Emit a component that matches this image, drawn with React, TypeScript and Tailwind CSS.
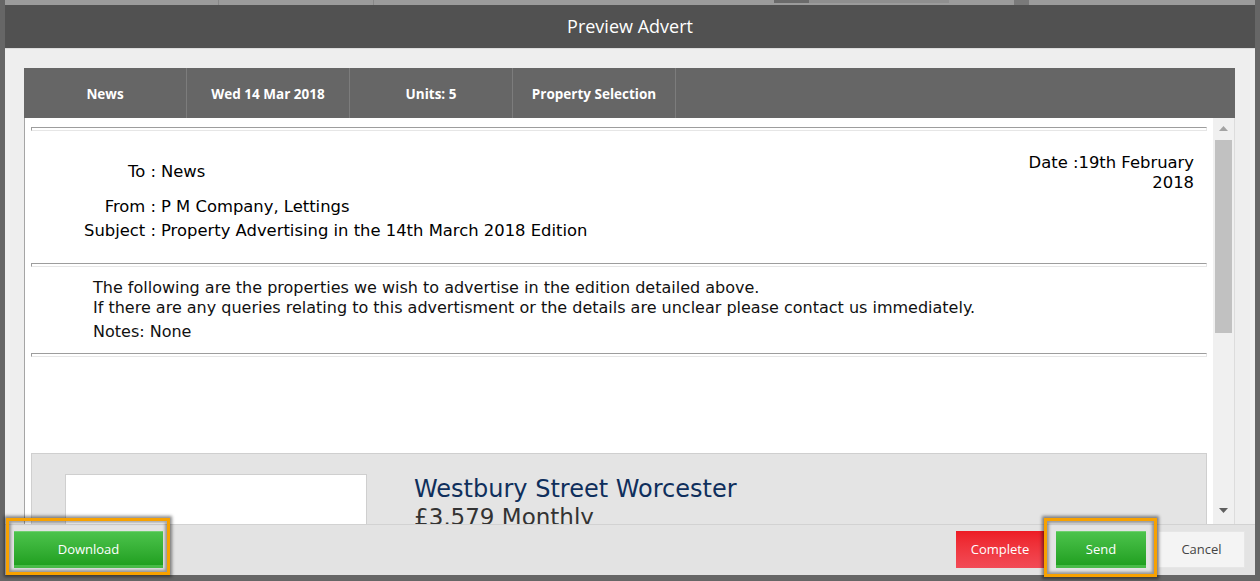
import React from "react";

const tabs = ["News", "Wed 14 Mar 2018", "Units: 5", "Property Selection"];

const Rule = () => (
  <div className="h-[4px] border border-t-[#9d9d9d] border-l-[#9d9d9d] border-b-[#e6e6e6] border-r-[#e6e6e6]" />
);

const bodyFont = { fontFamily: '"DejaVu Sans", "Liberation Sans", sans-serif' };

const HeaderRow = ({ label, value, className = "" }: { label: string; value: string; className?: string }) => (
  <div className={"flex h-[24px] items-center text-[16.4px] text-black " + className}>
    <div className="w-[125px] text-right">{label}</div>
    <div className="ml-[5px]">{value}</div>
  </div>
);

const App = () => {
  return (
    <div className="relative w-[1260px] h-[581px] bg-[#666] overflow-hidden font-['Open_Sans',sans-serif]">
      {/* page behind the overlay */}
      <div className="mx-[5px] h-[5px] bg-[#9b9b9b] flex overflow-hidden">
        <div className="w-[214px] border-r border-[#888]" />
        <div className="w-[155px] border-r border-[#888]" />
        <div className="w-[395px] flex items-end pl-[400px]">
          <div className="w-[60px] h-[2px] bg-[#8a8a8a]" />
        </div>
        <div className="w-[35px] h-[3px] bg-[#6a6a6a]" />
        <div className="w-[140px] h-[3px] bg-[#8f8f8f]" />
        <div className="w-[65px]" />
        <div className="w-[15px] h-[5px] bg-[#7a7a7a]" />
      </div>

      {/* modal */}
      <div className="mx-[5px] h-[570px] flex flex-col bg-[#eee]">
        <div className="h-[44px] bg-[#515151] border-b border-[#dcdcdc] flex items-center justify-center text-white text-[18px]">
          Preview Advert
        </div>

        <div className="flex-1 flex flex-col pl-[19px] pr-[20px] pt-[19px] min-h-0">
          <div className="h-[50px] bg-[#666] flex shrink-0">
            {tabs.map((t) => (
              <div
                key={t}
                className="w-[163px] border-r border-[#7c7c7c] flex items-center justify-center pt-[3px] text-white text-[13.5px] font-bold"
              >
                {t}
              </div>
            ))}
          </div>

          <div className="flex-1 flex min-h-0">
            <div
              className="flex-1 bg-white border-l border-[#a5a5a5] pl-[6px] pr-[6px] pt-[9px] overflow-hidden text-[16px] text-[#111]"
              style={bodyFont}
            >
              <Rule />

              <div className="flex justify-between">
                <div className="pt-[29px]">
                  <HeaderRow label="To :" value="News" />
                  <HeaderRow label="From :" value="P M Company, Lettings" className="mt-[11px]" />
                  <HeaderRow label="Subject :" value="Property Advertising in the 14th March 2018 Edition" />
                </div>
                <div className="pt-[22px] pr-[13px] w-[194px] text-right leading-[20px] text-[16.4px] text-black">
                  Date :19th February 2018
                </div>
              </div>

              <div className="mt-[20px]">
                <Rule />
              </div>

              <div className="mt-[11px] pl-[62px] leading-[20px]">
                <div>The following are the properties we wish to advertise in the edition detailed above.</div>
                <div>If there are any queries relating to this advertisment or the details are unclear please contact us immediately.</div>
                <div className="mt-[4px]">Notes: None</div>
              </div>

              <div className="mt-[11px]">
                <Rule />
              </div>

              <div className="mt-[96px] bg-[#e4e4e4] border border-[#cfcfcf] pt-[20px] pl-[33px] flex">
                <div className="w-[302px] h-[220px] bg-white border border-[#cfcfcf]" />
                <div className="ml-[47px]">
                  <div className="text-[24px] leading-[30px] text-[#0f2f5c]">Westbury Street Worcester</div>
                  <div className="text-[23px] leading-[26px] text-[#333]">£3,579 Monthly</div>
                </div>
              </div>
            </div>

            {/* scrollbar */}
            <div className="w-[22px] bg-[#f0f0f0] border-r border-[#dcdcdc] flex flex-col items-center">
              <div className="h-[20px] flex items-center justify-center">
                <svg width="9" height="5" viewBox="0 0 9 5">
                  <polygon points="0,5 4.5,0 9,5" fill="#a3a3a3" />
                </svg>
              </div>
              <div className="mt-[2px] w-[17px] h-[193px] bg-[#c1c1c1]" />
              <div className="flex-1" />
              <div className="h-[20px] mb-[4px] flex items-center justify-center">
                <svg width="9" height="5" viewBox="0 0 9 5">
                  <polygon points="0,0 9,0 4.5,5" fill="#5f5f5f" />
                </svg>
              </div>
            </div>
          </div>
        </div>

        <div className="h-[51px] shrink-0 bg-[#e3e3e3] border-t border-[#d2d2d2] flex items-start pt-[6px] text-[13px]">
          <button className="ml-[9px] w-[149px] h-[37px] pt-[3px] bg-linear-to-b from-[#4bc34b] to-[#20a020] border-t border-[#6fd06f] border-b-[3px] border-b-[#48bb48] text-white">
            Download
          </button>
          <div className="ml-auto mr-[10px] flex gap-[12px]">
            <button className="w-[88px] h-[37px] pt-[1px] bg-linear-to-b from-[#ed1b24] to-[#f24a56] text-white">
              Complete
            </button>
            <button className="w-[90px] h-[37px] pt-[3px] bg-linear-to-b from-[#4bc34b] to-[#20a020] border-t border-[#6fd06f] border-b-[3px] border-b-[#48bb48] text-white">
              Send
            </button>
            <button className="w-[87px] h-[37px] pt-[1px] bg-[#f4f4f4] border border-[#e6e6e6] text-[#444]">
              Cancel
            </button>
          </div>
        </div>
      </div>

      {/* highlight annotations */}
      <div className="absolute left-[6px] top-[518px] w-[164px] h-[57px] border-[3px] border-[#f7a100] shadow-[0_0_3px_2px_rgba(0,0,0,0.45),inset_0_0_3px_2px_rgba(0,0,0,0.35)]" />
      <div className="absolute left-[1044px] top-[518px] w-[113px] h-[59px] border-[3px] border-[#f7a100] shadow-[0_0_3px_2px_rgba(0,0,0,0.45),inset_0_0_3px_2px_rgba(0,0,0,0.35)]" />
    </div>
  );
};

export default App;
